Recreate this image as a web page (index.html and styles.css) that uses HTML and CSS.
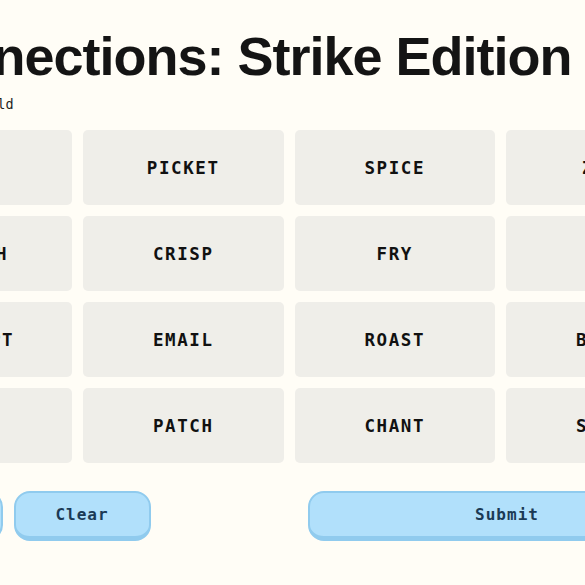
FILE: index.html
```html
<!DOCTYPE html>
<html lang="en">
<head>
  <meta charset="UTF-8" />
  <meta name="viewport" content="width=device-width, initial-scale=1.0"/>
  <title>Connections: Strike Edition</title>
  <link rel="stylesheet" href="styles.css">
</head>
<body>
  <div class="game">
    <h1>Connections: Strike Edition</h1>
    <p class="tagline">Strikes are bold</p>

    <div class="board">
      <div class="tile">BOWL</div>
      <div class="tile">PICKET</div>
      <div class="tile">SPICE</div>
      <div class="tile">ZEST</div>

      <div class="tile">SWITCH</div>
      <div class="tile">CRISP</div>
      <div class="tile">FRY</div>
      <div class="tile">OUT</div>

      <div class="tile">ATTEMPT</div>
      <div class="tile">EMAIL</div>
      <div class="tile">ROAST</div>
      <div class="tile">BLAST</div>

      <div class="tile">GOLD</div>
      <div class="tile">PATCH</div>
      <div class="tile">CHANT</div>
      <div class="tile">SPARE</div>
    </div>

    <div class="controls">
      <button class="btn btn-shuffle">Shuffle</button>
      <button class="btn btn-clear">Clear</button>
      <button class="btn btn-submit">Submit</button>
    </div>
  </div>
</body>
</html>
```

FILE: styles.css
```css
body {
  margin: 0;
  background-color: #fffdf6;
  display: flex;
  justify-content: center;
  font-family: 'DejaVu Sans Mono', monospace;
}

.game {
  flex-shrink: 0;
  width: 835px;
  margin-right: 7px;
  padding-top: 29px;
}

h1 {
  margin: 0 0 0 19px;
  font-family: 'Liberation Sans', Arial, sans-serif;
  font-size: 54px;
  line-height: 54px;
  font-weight: bold;
  letter-spacing: -1px;
  color: #141414;
  white-space: nowrap;
}

.tagline {
  margin: 13px 0 0 12px;
  font-size: 13.5px;
  line-height: 16px;
  color: #1e1e1e;
}

.board {
  margin-top: 18px;
  display: grid;
  grid-template-columns: repeat(4, 1fr);
  grid-auto-rows: 75px;
  gap: 11px;
}

.tile {
  display: flex;
  align-items: center;
  justify-content: center;
  padding-top: 1px;
  background-color: #efeee9;
  border-radius: 5px;
  font-size: 17.5px;
  font-weight: bold;
  letter-spacing: 1.6px;
  color: #111;
}

.controls {
  margin-top: 28px;
  display: flex;
  gap: 11px;
}

.btn {
  box-sizing: border-box;
  height: 50px;
  background-color: #b1e0fb;
  border: 2px solid #90cbee;
  border-bottom-width: 5px;
  border-radius: 16px;
  font-family: 'DejaVu Sans Mono', monospace;
  font-size: 16px;
  font-weight: bold;
  letter-spacing: 1px;
  color: #1b3a55;
  cursor: pointer;
}

.btn-shuffle {
  width: 131px;
}

.btn-clear {
  width: 137px;
}

.btn-submit {
  width: 399px;
  margin-left: auto;
}
```
